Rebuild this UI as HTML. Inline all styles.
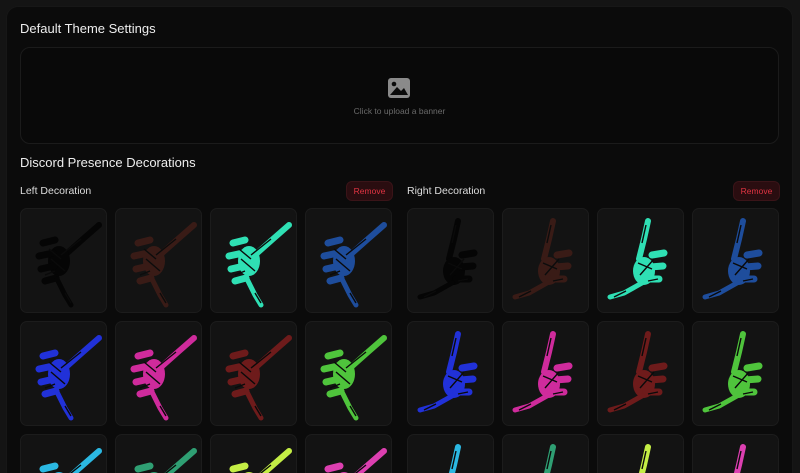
<!DOCTYPE html>
<html><head><meta charset="utf-8"><style>
*{margin:0;padding:0;box-sizing:border-box}
html,body{width:800px;height:473px;overflow:hidden}
body{background:#141414;font-family:"Liberation Sans",sans-serif;color:#e8e8e8}
#w{position:relative;width:800px;height:473px;overflow:hidden}
.panel{position:absolute;left:6px;top:6px;width:787px;height:467px;background:#0b0b0b;border-radius:12px 12px 0 0;border:1px solid #171717;border-bottom:none}
.t{position:absolute;font-size:13px;color:#eee}
.banner{position:absolute;left:20px;top:47px;width:759px;height:97px;border:1px solid #1b1b1b;border-radius:10px;background:#090909}
.up{position:absolute;left:0;width:100%;top:58px;text-align:center;font-size:8.5px;color:#6a6a6a}
.lbl{position:absolute;font-size:10.5px;color:#ddd}
.rm{position:absolute;width:47px;height:20px;border-radius:6px;background:#2a0d10;border:1px solid #3a1418;color:#e03442;font-size:8.5px;text-align:center;line-height:18px}
.c{position:absolute;width:87px;height:105px;background:#131313;border:1px solid #1c1c1c;border-radius:7px;overflow:hidden}
.c.b{height:39px;border-bottom:none;border-radius:7px 7px 0 0}
.c svg{position:absolute;left:0;top:0}
</style></head><body><div id="w">
<svg width="0" height="0" style="position:absolute"><defs>
<g id="L">
<path d="M44 46 L62 30 L78 16" fill="none" stroke="currentColor" stroke-width="6" stroke-linecap="round"/>
<ellipse cx="38" cy="52" rx="11" ry="15" fill="currentColor"/>
<path d="M22 34 L34 31 M18 47 L32 44 M20 60 L33 57 M24 72 L35 69" stroke="currentColor" stroke-width="7" stroke-linecap="round"/>
<path d="M36 70 L44 86 L50 96" fill="none" stroke="currentColor" stroke-width="5" stroke-linecap="round"/>
<path d="M40 46 L60 30 M30 50 L44 62 M28 40 L40 50 M44 84 L50 94 M24 66 L34 62" stroke="#0a0a0a" stroke-width="1.4" fill="none"/>
</g>
<g id="R">
<path d="M50 12 L46 30 L41 50" fill="none" stroke="currentColor" stroke-width="6" stroke-linecap="round"/>
<ellipse cx="46" cy="62" rx="11" ry="14" fill="currentColor"/>
<path d="M54 46 L66 44 M52 58 L65 57 M48 70 L61 70" stroke="currentColor" stroke-width="7" stroke-linecap="round"/>
<path d="M44 74 L26 84 L12 88" fill="none" stroke="currentColor" stroke-width="5" stroke-linecap="round"/>
<path d="M48 16 L44 34 M40 54 L54 60 M42 66 L56 50 M16 88 L28 82 M50 72 L60 70" stroke="#0a0a0a" stroke-width="1.4" fill="none"/>
</g>
</defs></svg>
<div class="panel"></div>
<div class="t" style="left:20px;top:21px;">Default Theme Settings</div>
<div class="banner">
<svg style="position:absolute;left:367px;top:30px" width="22" height="20" viewBox="0 0 22 20"><rect x="0" y="0" width="22" height="20" rx="3" fill="#8a8a8a"/><circle cx="6" cy="6" r="2.3" fill="#0b0b0b"/><path d="M2 17 L9 9 L13 13 L16 10 L20 17 Z" fill="#0b0b0b"/></svg>
<div class="up">Click to upload a banner</div>
</div>
<div class="t" style="left:20px;top:155px;">Discord Presence Decorations</div>
<div class="lbl" style="left:20px;top:185px">Left Decoration</div>
<div class="rm" style="left:346px;top:181px">Remove</div>
<div class="lbl" style="left:407px;top:185px">Right Decoration</div>
<div class="rm" style="left:733px;top:181px">Remove</div>
<div id="g"></div>
</div>
<script>
var cols=["#050505","#4a2019","#2fe0b4","#1e4d9c","#2131d8","#cf2b9c","#6e1b1b","#4fc43c","#2bb8e2","#2f9f73","#c4ee45","#dc3fb0"];
var op=[1,0.7,1,1,1,1,1,1,1,1,1,1];
var lx=[20,115,210,305],rx=[407,502,597,692],ys=[208,321,434];
var h="";
for(var r=0;r<3;r++)for(var i=0;i<4;i++){var k=r*4+i;var cl=r==2?"c b":"c";
h+='<div class="'+cl+'" style="left:'+lx[i]+'px;top:'+ys[r]+'px;color:'+cols[k]+'"><svg width="87" height="105" viewBox="0 0 87 105" style="opacity:'+op[k]+'"><use href="#L"/></svg></div>';
h+='<div class="'+cl+'" style="left:'+rx[i]+'px;top:'+ys[r]+'px;color:'+cols[k]+'"><svg width="87" height="105" viewBox="0 0 87 105" style="opacity:'+op[k]+'"><use href="#R"/></svg></div>';}
document.getElementById("g").innerHTML=h;
</script>
</body></html>
